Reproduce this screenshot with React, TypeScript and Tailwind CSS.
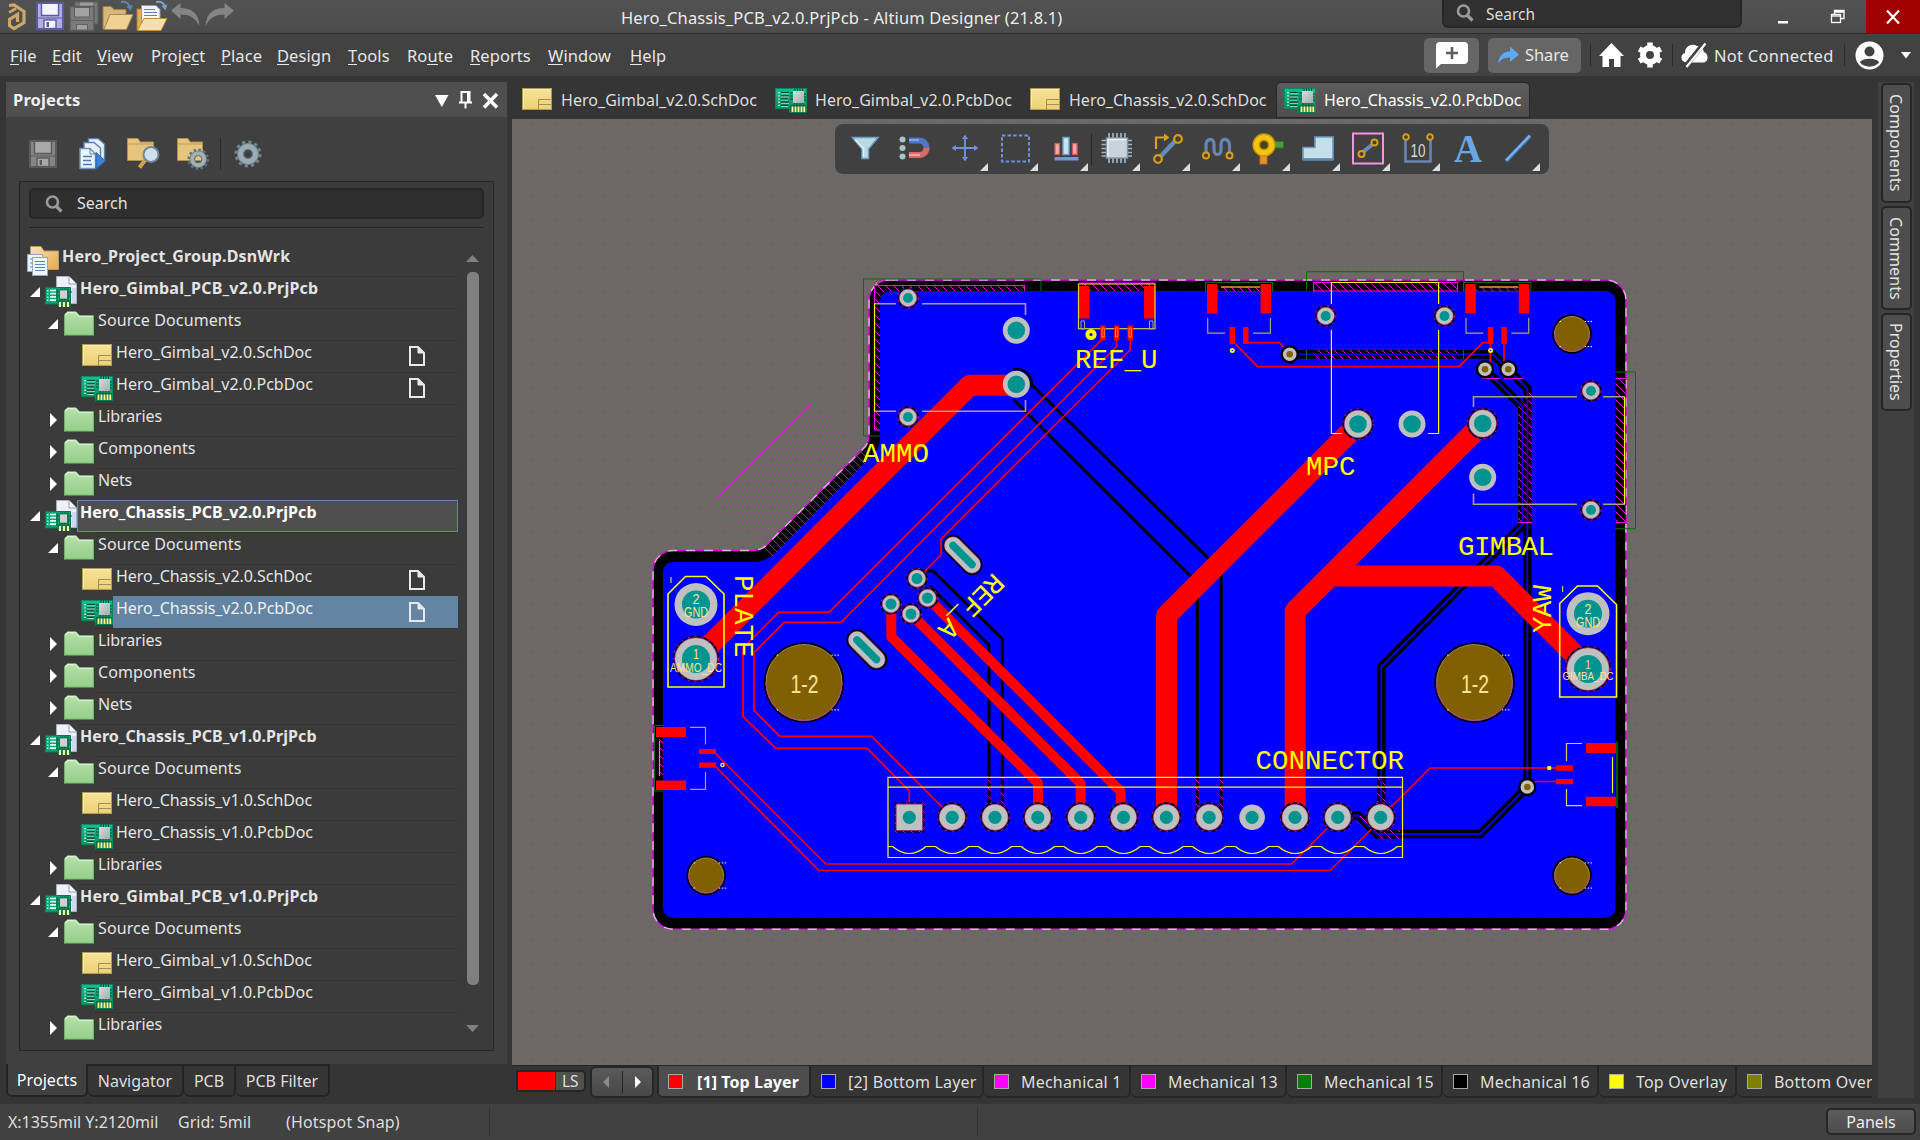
import React from "react";

/* ---------- Small shared icons ---------- */

const SchIcon = ({ className = "" }: { className?: string }) => (
  <svg className={"shrink-0 " + className} width="30" height="22" viewBox="0 0 30 22">
    <defs>
      <linearGradient id="schFill" x1="0" y1="0" x2="0" y2="1">
        <stop offset="0" stopColor="#f7e19a" />
        <stop offset="1" stopColor="#ecd274" />
      </linearGradient>
    </defs>
    <rect x="0.5" y="0.5" width="29" height="21" fill="url(#schFill)" stroke="#b09a58" />
    <path d="M1.5 20V1.5H28.5" fill="none" stroke="#fbedb9" />
    <path d="M16.5 21V11.5H29M16.5 16.5H29M20 16.5H29" fill="none" stroke="#a8904c" />
  </svg>
);

const PcbIcon = ({ className = "", w = 32, h = 25 }: { className?: string; w?: number; h?: number }) => (
  <svg className={"shrink-0 " + className} width={w} height={h} viewBox="0 0 32 25">
    <defs>
      <linearGradient id="pcbFill" x1="0" y1="0" x2="0" y2="1">
        <stop offset="0" stopColor="#12bd92" />
        <stop offset="1" stopColor="#06875a" />
      </linearGradient>
      <linearGradient id="chipFill" x1="0" y1="0" x2="1" y2="1">
        <stop offset="0" stopColor="#d8dcdb" />
        <stop offset="1" stopColor="#a5acaa" />
      </linearGradient>
    </defs>
    <path d="M0.5 0.5H31.500V24.500H14.500V20.500H0.500Z" fill="url(#pcbFill)" stroke="#078a5e" />
    <path d="M4 4V18" stroke="#eafff6" strokeWidth="1.4" strokeDasharray="1.4 1.8" />
    <path d="M6 4.700H14M6 7.900H14M6 11.100H13M6 14.300H14M6 17.500H13" stroke="#063f2c" strokeWidth="1.500" />
    <path d="M6 5.700H14M6 8.900H14M6 12.100H13M6 15.300H14M6 18.500H13" stroke="#d9fff0" strokeWidth="0.700" />
    <rect x="18" y="3" width="11" height="12" fill="url(#chipFill)" />
    <path d="M20 0.500V3M22.500 0.500V3M25 0.500V3M27.500 0.500V3M15 5H18M15 8H18M15 11H18M29 6H31M29 9H31M29 12H31M19 15V17M22 15V17M25 15V17M28 15V17" stroke="#0a4935" strokeWidth="1" />
    <rect x="15" y="17" width="16" height="7.500" fill="#066b43" />
    <path d="M17.500 18.500V24M20.500 18.500V24M23.500 18.500V24M26.500 18.500V24M29.300 18.500V24" stroke="#fbf59a" strokeWidth="1.900" />
  </svg>
);

const FolderIcon = () => (
  <svg className="shrink-0" width="30" height="25" viewBox="0 0 30 25">
    <defs>
      <linearGradient id="greenFolder" x1="0" y1="0" x2="0" y2="1">
        <stop offset="0" stopColor="#b9dfae" />
        <stop offset="1" stopColor="#93cf86" />
      </linearGradient>
    </defs>
    <path d="M0.500 24.500V3.500L3.500 0.700H12L15.500 4.500H29.500V24.500Z" fill="url(#greenFolder)" stroke="#7fae74" />
    <path d="M1.500 3.800L4 1.700H11.600L15 5.500H28.500" fill="none" stroke="#d9f2d1" strokeWidth="1.200" />
    <path d="M0.500 24.400H29.500" stroke="#4f7a48" />
  </svg>
);

const ProjectIcon = () => (
  <svg className="shrink-0" width="32" height="31" viewBox="0 0 32 31">
    <path d="M11.500 0.500H24L31.500 8V27.500H11.500Z" fill="#eef1fa" stroke="#a7afc4" />
    <path d="M24 0.500V8H31.500" fill="#fff" stroke="#8f98b4" />
    <path d="M27 12V27H31V12Z" fill="#cfd8ee" />
    <path d="M0.500 11.500H25.500V30.500H13V28H0.500Z" fill="#0ba377" stroke="#067a52" />
    <path d="M2.800 14V26" stroke="#eafff6" strokeWidth="1.400" strokeDasharray="1.400 1.800" />
    <path d="M5 14.500H11M5 17.700H11M5 20.900H11M5 24.100H11" stroke="#e5fff5" strokeWidth="1.700" />
    <path d="M12 13V26M12 16H27M12 20H25M17 12V28M20 12V28M23 12V28" stroke="#075c3e" />
    <rect x="14.500" y="14" width="8" height="9" fill="#cdd2d0" stroke="#0a4935" strokeWidth="0.600" />
    <rect x="12.500" y="24.500" width="13" height="6.500" fill="#066b43" />
    <path d="M15 26V31M19 26V31M23 26V31" stroke="#fbf59a" strokeWidth="2.200" />
  </svg>
);

const GroupIcon = () => (
  <svg className="shrink-0" width="32" height="31" viewBox="0 0 32 31">
    <defs>
      <linearGradient id="orangeFolder" x1="0" y1="0" x2="1" y2="1">
        <stop offset="0" stopColor="#f9e3b4" />
        <stop offset="1" stopColor="#e5a850" />
      </linearGradient>
    </defs>
    <path d="M3.500 23.500V0.500H14L17 5H31.500V23.500Z" fill="url(#orangeFolder)" stroke="#b99a5e" />
    <rect x="0.500" y="8.500" width="15" height="17" fill="#eef4fd" stroke="#93a4c2" />
    <path d="M3 13H5M3 17H5M3 21H5" stroke="#5e82bb" />
    <rect x="5.500" y="11.500" width="15" height="18" fill="#f1f6fd" stroke="#93a4c2" />
    <path d="M8 15.500H18M8 18.500H18M8 21.500H18M8 24.500H18" stroke="#5e82bb" strokeWidth="1.200" />
  </svg>
);

const DocIcon = () => (
  <svg width="16" height="20" viewBox="0 0 16 20">
    <path d="M1 1H9L15 7V19H1Z" fill="none" stroke="#e9e9e9" strokeWidth="2" />
    <path d="M9 1V7H15Z" fill="#e9e9e9" stroke="#e9e9e9" />
  </svg>
);

const GearShape = ({ fill, stroke }: { fill: string; stroke: string }) => (
  <g>
    <circle cx="14" cy="14" r="11.500" fill="none" stroke={stroke} strokeWidth="4" strokeDasharray="3 3.020" />
    <circle cx="14" cy="14" r="7.500" fill="none" stroke={stroke} strokeWidth="7" />
    <circle cx="14" cy="14" r="7.500" fill="none" stroke={fill} strokeWidth="5" />
    <circle cx="14" cy="14" r="4.500" fill="none" stroke="#66757c" strokeWidth="1" />
  </g>
);

const Magnifier = ({ color = "#9a9a9a" }: { color?: string }) => (
  <svg className="shrink-0" width="18" height="18" viewBox="0 0 18 18">
    <circle cx="7.500" cy="7" r="5.500" fill="none" stroke={color} strokeWidth="2.600" />
    <path d="M11 11L16.500 16.500" stroke={color} strokeWidth="3.200" />
  </svg>
);

const Floppy = ({ body, edge, light, size = 28 }: { body: string; edge: string; light: string; size?: number }) => (
  <svg className="shrink-0" width={size} height={size} viewBox="0 0 28 28">
    <rect x="1" y="1" width="26" height="26" fill={body} stroke={edge} strokeWidth="2" />
    <rect x="6" y="2" width="16" height="11" fill={light} />
    <path d="M5.500 1V13.500H22.500V1" fill="none" stroke={edge} strokeWidth="1.400" />
    <rect x="8" y="18" width="12" height="8.500" fill={light} stroke={edge} strokeWidth="1.400" />
    <rect x="10.500" y="20" width="2.500" height="5" fill={edge} />
    <path d="M1 16H27" stroke={edge} />
  </svg>
);

/* ---------- Title bar ---------- */

const TitleBar = () => (
  <div className="flex h-[34px] shrink-0 items-start border-b border-[#2c2c2c] bg-linear-to-b from-[#525252] to-[#4c4c4c]">
    <div className="flex h-[33px] w-[240px] items-start pl-2">
      <svg width="18" height="33" viewBox="0 0 18 33" className="shrink-0">
        <defs>
          <linearGradient id="goldFill" x1="0" y1="0" x2="0" y2="1">
            <stop offset="0" stopColor="#c9a763" />
            <stop offset="1" stopColor="#d8b672" />
          </linearGradient>
        </defs>
        <path d="M1 5.500L6 5L16 11.500V22.500L6 28.500L1.500 25.500V19.500L9.500 14.500V22" fill="none" stroke="#cba964" strokeWidth="3.200" />
        <path d="M1 12.500L8 8.500" stroke="#cba964" strokeWidth="2.600" />
      </svg>
      <div className="mt-0.5 ml-[10px]">
        <Floppy body="#b1aee6" edge="#5d5ba0" light="#f5f5ff" />
      </div>
      <svg className="ml-[5px] shrink-0" width="31" height="32" viewBox="0 0 31 32">
        <rect x="6" y="2" width="23" height="22" fill="#777" stroke="#5c5c5c" />
        <rect x="11" y="2.500" width="13" height="5" fill="#9a9a9a" />
        <rect x="1" y="6.500" width="24" height="24" fill="#7b7b7b" stroke="#5a5a5a" strokeWidth="1.400" />
        <rect x="5.500" y="7.500" width="15" height="9.500" fill="#a2a2a2" stroke="#606060" />
        <rect x="7.500" y="24.500" width="11" height="5.500" fill="#a2a2a2" stroke="#606060" />
        <path d="M1 20.500H25" stroke="#606060" />
      </svg>
      <svg className="ml-[2px] shrink-0" width="32" height="32" viewBox="0 0 32 32">
        <path d="M1 29V6.500H9L12 9.500H24V29Z" fill="#d9b779" stroke="#9c7f49" />
        <path d="M2 29.500L8 14.500H31L24.500 29.500Z" fill="#f0d193" stroke="#a58550" />
        <path d="M19 2C24 1 27 3 28 8" fill="none" stroke="#5c86b4" strokeWidth="2" />
        <path d="M24.500 6.500L31 5L28.500 11Z" fill="#5c86b4" />
      </svg>
      <svg className="ml-[2px] shrink-0" width="32" height="32" viewBox="0 0 32 32">
        <path d="M1 30V9H20V30Z" fill="#e7ab55" stroke="#a98345" />
        <path d="M5.500 5.500H20L24 9.500V24H5.500Z" fill="#f3f6fd" stroke="#8c98b8" />
        <path d="M8 9.500H19M8 12.500H21M8 15.500H21M8 18.500H21" stroke="#5f80c0" strokeWidth="1.200" />
        <path d="M1.500 30.500L8 18.500H31L25 30.500Z" fill="#fadfae" stroke="#c08d45" />
        <path d="M20 2C25 1 28 3 29 7" fill="none" stroke="#7aa3c6" strokeWidth="2" />
        <path d="M25.500 6L31.500 4.500L29.500 10.500Z" fill="#7aa3c6" />
      </svg>
      <svg className="ml-[3px] shrink-0" width="30" height="30" viewBox="0 0 30 30">
        <path d="M0 10.500L9.500 3V8C20 8 28 13 28.500 26C24 17 18 14.500 9.500 14.500V19Z" fill="#858585" />
      </svg>
      <svg className="ml-[3px] shrink-0" width="30" height="30" viewBox="0 0 30 30">
        <path d="M30 10.500L20.500 3V8C10 8 2 13 1.500 26C6 17 12 14.500 20.500 14.500V19Z" fill="#858585" />
      </svg>
    </div>
    <div className="ml-[381px] w-[821px] whitespace-nowrap pt-[6px] text-[16.5px] leading-6 tracking-[0.14px] text-[#ececec]">
      Hero_Chassis_PCB_v2.0.PrjPcb - Altium Designer (21.8.1)
    </div>
    <div className="flex h-[28px] w-[300px] shrink-0 items-center gap-3 rounded-b-md border-2 border-t-0 border-[#262626] bg-[#303030] pl-3 text-[#dcdcdc]">
      <Magnifier />
      <span className="pt-[2px] text-[15.5px]">Search</span>
    </div>
    <svg className="ml-[36px] mt-[8px] shrink-0" width="68" height="18" viewBox="0 0 68 18">
      <rect x="0" y="13" width="10" height="2.500" fill="#fff" />
      <path d="M56.500 6V2.500H66V10.500H62.500M56.500 4H66" fill="none" stroke="#fff" strokeWidth="1.300" />
      <rect x="53.500" y="6.500" width="9" height="8" fill="none" stroke="#fff" strokeWidth="1.300" />
      <path d="M53.500 8H62.500" stroke="#fff" strokeWidth="1.300" />
    </svg>
    <div className="ml-[20px] flex h-[33px] w-[54px] shrink-0 items-center justify-center bg-[#a00202]">
      <svg width="14" height="14" viewBox="0 0 14 14">
        <path d="M1 0.500L13 13.500M13 0.500L1 13.500" stroke="#fff" strokeWidth="2.200" />
      </svg>
    </div>
  </div>
);

/* ---------- Menu bar ---------- */

const menus: [string, string, string, string][] = [
  ["", "F", "ile", "w-[42px]"],
  ["", "E", "dit", "w-[45px]"],
  ["", "V", "iew", "w-[54px]"],
  ["Proje", "c", "t", "w-[70px]"],
  ["", "P", "lace", "w-[56px]"],
  ["", "D", "esign", "w-[71px]"],
  ["", "T", "ools", "w-[59px]"],
  ["Ro", "u", "te", "w-[63px]"],
  ["", "R", "eports", "w-[78px]"],
  ["", "W", "indow", "w-[82px]"],
  ["", "H", "elp", "w-[60px]"],
];

const Sep = ({ className = "" }: { className?: string }) => (
  <div className={"h-[22px] w-px shrink-0 bg-[#2a2a2a] " + className} />
);

const MenuBar = () => (
  <div className="flex h-[42px] shrink-0 items-center bg-[#424242] pl-[10px] text-[16.5px] text-[#e6e6e6]">
    {menus.map(([a, u, b, w]) => (
      <div key={a + u + b} className={"whitespace-nowrap pt-px tracking-[0.06px] " + w}>
        {a}
        <span className="inline-block border-b border-[#e6e6e6] leading-4">{u}</span>
        {b}
      </div>
    ))}
    <div className="ml-auto flex items-center">
      <div className="flex h-[35px] w-[55px] items-center justify-center rounded-[5px] bg-[#666]">
        <svg width="32" height="28" viewBox="0 0 32 28">
          <path d="M4 1H28Q32 1 32 5V19Q32 23 28 23H5L0 27.500V5Q0 1 4 1Z" fill="#fff" />
          <path d="M16 6V18M10 12H22" stroke="#5c5c5c" strokeWidth="2.600" />
        </svg>
      </div>
      <div className="ml-[9px] flex h-[35px] w-[93px] items-center rounded-[5px] bg-[#666] pl-[10px]">
        <svg width="21" height="18" viewBox="0 0 21 18">
          <path d="M0 17.500C1 9 6 5.500 12 5.500V0.500L21 8.500L12 16V11.500C7 11 3 13 0 17.500Z" fill="#5ea9f4" />
        </svg>
        <span className="ml-[6px] text-[16.5px] tracking-[-0.1px]">Share</span>
      </div>
      <Sep className="ml-[9px]" />
      <svg className="ml-[8px]" width="25" height="24" viewBox="0 0 25 24">
        <path d="M12.500 0L25 13H21.500V24H15V16H10V24H3.500V13H0Z" fill="#fff" />
      </svg>
      <svg className="ml-[13px]" width="26" height="26" viewBox="0 0 26 26">
        <circle cx="13" cy="13" r="7" fill="none" stroke="#fff" strokeWidth="6" />
        <path d="M13 0.500V5M13 21V25.500M2.200 6.800L6 9M20 17L23.800 19.200M2.200 19.200L6 17M20 9L23.800 6.800" stroke="#fff" strokeWidth="5.500" />
      </svg>
      <Sep className="ml-[9px]" />
      <svg className="ml-[8px]" width="28" height="26" viewBox="0 0 28 26">
        <path d="M6 20.500C-1 20.500 -1 12 4 11C4 4 11 1 16 4C22 4 23 9 22.500 10C28 11 28 20.500 22 20.500Z" fill="#fff" />
        <path d="M24 0L4 25" stroke="#424242" strokeWidth="5" />
        <path d="M24.500 1.500L5.500 25" stroke="#fff" strokeWidth="2.200" />
      </svg>
      <span className="ml-[5px] w-[120px] whitespace-nowrap pt-px text-[16.5px] tracking-[0.26px]">Not Connected</span>
      <Sep className="ml-[10px]" />
      <svg className="ml-[10px]" width="29" height="29" viewBox="0 0 29 29">
        <circle cx="14.500" cy="14.500" r="14" fill="#fff" />
        <circle cx="14.500" cy="10.500" r="5" fill="#424242" />
        <path d="M5 21.500C7 16.500 22 16.500 24 21.500C20 27 9 27 5 21.500Z" fill="#424242" />
      </svg>
      <svg className="ml-[17px] mr-[9px]" width="10" height="7" viewBox="0 0 10 7">
        <path d="M0 0H10L5 6.500Z" fill="#fff" />
      </svg>
    </div>
  </div>
);

/* ---------- Projects panel ---------- */

type Kind = "group" | "project" | "folder" | "sch" | "pcb";
type Row = { kind: Kind; label: string; open?: boolean; doc?: boolean; sel?: "outline" | "fill" };

const rows: Row[] = [
  { kind: "group", label: "Hero_Project_Group.DsnWrk" },
  { kind: "project", label: "Hero_Gimbal_PCB_v2.0.PrjPcb" },
  { kind: "folder", label: "Source Documents", open: true },
  { kind: "sch", label: "Hero_Gimbal_v2.0.SchDoc", doc: true },
  { kind: "pcb", label: "Hero_Gimbal_v2.0.PcbDoc", doc: true },
  { kind: "folder", label: "Libraries" },
  { kind: "folder", label: "Components" },
  { kind: "folder", label: "Nets" },
  { kind: "project", label: "Hero_Chassis_PCB_v2.0.PrjPcb", sel: "outline" },
  { kind: "folder", label: "Source Documents", open: true },
  { kind: "sch", label: "Hero_Chassis_v2.0.SchDoc", doc: true },
  { kind: "pcb", label: "Hero_Chassis_v2.0.PcbDoc", doc: true, sel: "fill" },
  { kind: "folder", label: "Libraries" },
  { kind: "folder", label: "Components" },
  { kind: "folder", label: "Nets" },
  { kind: "project", label: "Hero_Chassis_PCB_v1.0.PrjPcb" },
  { kind: "folder", label: "Source Documents", open: true },
  { kind: "sch", label: "Hero_Chassis_v1.0.SchDoc" },
  { kind: "pcb", label: "Hero_Chassis_v1.0.PcbDoc" },
  { kind: "folder", label: "Libraries" },
  { kind: "project", label: "Hero_Gimbal_PCB_v1.0.PrjPcb" },
  { kind: "folder", label: "Source Documents", open: true },
  { kind: "sch", label: "Hero_Gimbal_v1.0.SchDoc" },
  { kind: "pcb", label: "Hero_Gimbal_v1.0.PcbDoc" },
  { kind: "folder", label: "Libraries" },
];

const OpenArrow = ({ className = "" }: { className?: string }) => (
  <svg className={"shrink-0 " + className} width="10" height="10" viewBox="0 0 10 10">
    <path d="M10 0V10H0Z" fill="#fff" />
  </svg>
);

const labelSpacing = (row: Row) => {
  const chassis = row.label.includes("Chassis");
  if (row.kind === "group") return "font-bold tracking-[0.17px]";
  if (row.kind === "project") return chassis ? "font-bold tracking-[0.06px]" : "font-bold tracking-[0.23px]";
  if (row.kind === "folder") return row.label.length > 9 ? "tracking-[0.11px]" : "tracking-[-0.12px]";
  return chassis ? "tracking-[-0.06px]" : "tracking-[0.04px]";
};

const TreeRow = ({ row }: { row: Row }) => {
  const box =
    row.sel === "outline"
      ? "border border-[#6487a8] bg-[#4f4f4f] pl-[2px] text-white"
      : row.sel === "fill"
        ? "border-t border-[#6384a2] bg-[#6384a2] pl-[3px] text-[#f0f0f0]"
        : row.kind === "group"
          ? "border-t border-transparent pl-[3px]"
          : "border-t border-[#333] pl-[3px]";
  return (
    <div className="flex h-[32px] items-start pl-[7px]">
      {row.kind === "group" && (
        <div className="w-[32px] shrink-0 pt-[2px]">
          <GroupIcon />
        </div>
      )}
      {row.kind === "project" && (
        <div className="flex w-[50px] shrink-0 pl-[3px]">
          <OpenArrow className="mt-[11px]" />
          <div className="ml-[5px]">
            <ProjectIcon />
          </div>
        </div>
      )}
      {row.kind === "folder" && (
        <div className="flex w-[68px] shrink-0 pl-[21px]">
          {row.open ? (
            <OpenArrow className="mt-[11px]" />
          ) : (
            <svg className="ml-[2px] mr-[1px] mt-[9px] shrink-0" width="7" height="14" viewBox="0 0 7 14">
              <path d="M0 0L7 7L0 14Z" fill="#fff" />
            </svg>
          )}
          <div className="ml-[6px] pt-[3px]">
            <FolderIcon />
          </div>
        </div>
      )}
      {row.kind === "sch" && (
        <div className="w-[86px] shrink-0 pl-[55px] pt-[4px]">
          <SchIcon />
        </div>
      )}
      {row.kind === "pcb" && (
        <div className="w-[86px] shrink-0 pl-[54px] pt-[4px]">
          <PcbIcon />
        </div>
      )}
      <div className={"flex h-[32px] flex-1 items-start justify-between pr-[33px] " + box}>
        <span className={"whitespace-nowrap text-[16px] leading-[22px] " + labelSpacing(row)}>{row.label}</span>
        {row.doc && (
          <span className="pt-[5px]">
            <DocIcon />
          </span>
        )}
      </div>
    </div>
  );
};

const ProjectsPanel = () => (
  <div className="flex w-[501px] shrink-0 flex-col">
    <div className="flex h-[35px] shrink-0 items-center bg-[#4f4f4f] pl-[7px] text-[#f0f0f0]">
      <span className="text-[16.5px] font-bold tracking-[0.15px]">Projects</span>
      <svg className="ml-auto mr-[8px]" width="64" height="18" viewBox="0 0 64 18">
        <path d="M0 4H13.500L6.800 16Z" fill="#fff" />
        <path d="M26.500 11V1H34.500V11M33 1V11M24 11.500H37M30.500 11.500V17.500" fill="none" stroke="#fff" strokeWidth="2" />
        <path d="M49 3L62 16.500M62 3L49 16.500" stroke="#fff" strokeWidth="3.500" />
      </svg>
    </div>
    <div className="flex min-h-0 flex-1 flex-col bg-[#404040]">
      <div className="flex h-[64px] shrink-0 items-start pl-[23px] pt-[21px]">
        <div className="mt-[2px]">
          <Floppy body="#858585" edge="#5b5b5b" light="#a9a9a9" />
        </div>
        <svg className="ml-[22px]" width="27" height="32" viewBox="0 0 27 32">
          <path d="M9.500 0.500H19L25.500 6V22.500H9.500Z" fill="#e6f1fa" stroke="#5a80ad" strokeWidth="1.400" />
          <path d="M5 4.500H15L21.500 10V26H5Z" fill="#e6f1fa" stroke="#5a80ad" strokeWidth="1.400" />
          <path d="M1 10.500H11L16.500 16V30.500H1Z" fill="#e9f6fb" stroke="#7295bd" strokeWidth="1.400" />
          <path d="M11 10.500V16H16.500" fill="none" stroke="#5a80ad" />
          <path d="M4 18.500H13M4 22.500H12M4 26.500H13" stroke="#4f78b0" strokeWidth="1.600" />
          <path d="M17 14.500L26.500 23L17 31Z" fill="#3e82d8" stroke="#2a5fa8" />
        </svg>
        <svg className="ml-[21px]" width="33" height="31" viewBox="0 0 33 31">
          <path d="M0.500 22.500V0.500H11L13 4H26.500V22.500Z" fill="#e8c57c" stroke="#b08f4f" />
          <path d="M1 6H26" stroke="#b08f4f" strokeWidth="0.800" />
          <path d="M19 21L12.500 29.500" stroke="#d3a04a" strokeWidth="4" />
          <ellipse cx="24" cy="16.500" rx="7.500" ry="7.500" fill="#cfdfec" stroke="#6f8797" strokeWidth="2" />
        </svg>
        <svg className="ml-[17px]" width="33" height="32" viewBox="0 0 33 32">
          <path d="M0.500 22.500V0.500H11L13 4H25.500V22.500Z" fill="#e8c57c" stroke="#b08f4f" />
          <path d="M1 6H25" stroke="#b08f4f" strokeWidth="0.800" />
          <g transform="translate(10 10) scale(0.8)">
            <GearShape fill="#a3b1b5" stroke="#5f747c" />
          </g>
        </svg>
        <div className="ml-[10px] h-[32px] w-px bg-[#2a2a2a]" />
        <svg className="ml-[13px] mt-[2px]" width="28" height="28" viewBox="0 0 28 28">
          <GearShape fill="#9aacb5" stroke="#72848e" />
        </svg>
      </div>
      <div className="mx-[13px] flex h-[870px] flex-col border border-[#262626] bg-[#3b3b3b]">
        <div className="mx-[9px] mt-[6px] flex h-[31px] shrink-0 items-center gap-[14px] rounded-[5px] border-2 border-[#262626] bg-[#2f2f2f] pl-[14px] text-[16px] text-[#e0e0e0]">
          <Magnifier />
          <span className="pb-[2px]">Search</span>
        </div>
        <div className="mx-[9px] mt-[8px] h-px shrink-0 bg-[#262626]" />
        <div className="mt-[16px] flex flex-1">
          <div className="w-[438px] text-[#e4e4e4]">
            {rows.map((r, i) => (
              <TreeRow key={i} row={r} />
            ))}
          </div>
          <div className="flex flex-col items-center pl-[8px] pt-[11px]">
            <svg width="13" height="7" viewBox="0 0 13 7">
              <path d="M6.500 0L13 7H0Z" fill="#808080" />
            </svg>
            <div className="mt-[10px] h-[713px] w-[12px] rounded-[5px] bg-[#808080]" />
            <svg className="mt-[40px]" width="13" height="7" viewBox="0 0 13 7">
              <path d="M0 0H13L6.500 7Z" fill="#808080" />
            </svg>
          </div>
        </div>
      </div>
    </div>
    <div className="flex h-[40px] shrink-0 items-start text-[16px] text-[#dedede]">
      <div className="flex h-[33px] w-[82px] items-center justify-center rounded-b-md border-2 border-t-0 border-[#232323] bg-[#404040] pt-px tracking-[0.05px] text-white">Projects</div>
      <div className="flex h-[33px] w-[96px] items-center justify-center rounded-b-md border-2 border-l-0 border-[#232323] bg-[#353535] pt-px">Navigator</div>
      <div className="flex h-[33px] w-[52px] items-center justify-center rounded-b-md border-2 border-l-0 border-[#232323] bg-[#353535] pt-px">PCB</div>
      <div className="flex h-[33px] w-[94px] items-center justify-center rounded-b-md border-2 border-l-0 border-[#232323] bg-[#353535] pt-px">PCB Filter</div>
    </div>
  </div>
);

/* ---------- Document tabs ---------- */

const DocTabs = () => (
  <div className="flex h-[43px] shrink-0 items-start pt-[6px] text-[16px] text-[#dedede]">
    <div className="flex h-[36px] w-[253px] items-start pl-[10px] pt-[6px]">
      <SchIcon />
      <span className="ml-[9px] leading-[24px] tracking-[0.04px]">Hero_Gimbal_v2.0.SchDoc</span>
    </div>
    <div className="flex h-[36px] w-[255px] items-start pl-[10px] pt-[6px]">
      <PcbIcon />
      <span className="ml-[8px] leading-[24px] tracking-[0.04px]">Hero_Gimbal_v2.0.PcbDoc</span>
    </div>
    <div className="flex h-[36px] w-[256px] items-start pl-[10px] pt-[6px]">
      <SchIcon />
      <span className="ml-[9px] leading-[24px]">Hero_Chassis_v2.0.SchDoc</span>
    </div>
    <div className="flex h-[36px] w-[254px] items-start rounded-t-[5px] border border-[#262626] bg-linear-to-b from-[#5c5c5c] to-[#4e4e4e] pl-[7px] pt-[5px] text-white">
      <PcbIcon />
      <span className="ml-[8px] leading-[24px] tracking-[-0.04px]">Hero_Chassis_v2.0.PcbDoc</span>
    </div>
  </div>
);

/* ---------- Floating tool bar ---------- */

const tools: { corner?: boolean; sep?: boolean; icon: React.ReactNode }[] = [
  {
    icon: (
      <>
        <path d="M3.500 5.500H29L19.500 17V26.500H13V17Z" fill="#b9d9e4" stroke="#6fa3c4" strokeWidth="1.500" />
        <path d="M6 7.500L14.500 16.500V25" fill="none" stroke="#e4f3f7" strokeWidth="1.500" />
      </>
    ),
  },
  {
    icon: (
      <>
        <circle cx="3.500" cy="7.500" r="3" fill="#a9c2c4" />
        <circle cx="3.500" cy="16" r="3" fill="#a9c2c4" />
        <circle cx="3.500" cy="24.500" r="3" fill="#a9c2c4" />
        <path d="M10 8.500H20C24.500 8.500 27.500 12 27.500 15.500" fill="none" stroke="#4f79c8" strokeWidth="6" />
        <path d="M27.500 15.500C27.500 20 24.500 23 20 23H10" fill="none" stroke="#d86a6a" strokeWidth="6" />
        <path d="M10 8H20" stroke="#86a6e4" strokeWidth="2" />
        <path d="M10 23H21" stroke="#f4a3a0" strokeWidth="2" />
      </>
    ),
  },
  {
    corner: true,
    icon: (
      <>
        <path d="M16 4V28M4 16H28" stroke="#6e90e8" strokeWidth="1.800" />
        <path d="M16 2.500L19 7H13ZM16 29.500L13 25H19ZM2.500 16L7 13V19ZM29.500 16L25 19V13Z" fill="#6e90e8" />
      </>
    ),
  },
  { corner: true, icon: <rect x="3" y="3.500" width="27" height="26" fill="none" stroke="#6e90e8" strokeWidth="2" strokeDasharray="3.500 2.100" /> },
  {
    corner: true,
    icon: (
      <>
        <rect x="6" y="11.500" width="4.500" height="11" fill="#f5a8a4" stroke="#cf5d60" strokeWidth="1.300" />
        <rect x="14" y="5.500" width="6" height="17" fill="#c5e3f1" stroke="#6aa5cd" strokeWidth="1.400" />
        <rect x="23.500" y="11.500" width="4.500" height="11" fill="#f5a8a4" stroke="#cf5d60" strokeWidth="1.300" />
        <rect x="5.500" y="25" width="24" height="3.500" fill="#6f99dd" />
      </>
    ),
  },
  {
    corner: true,
    sep: true,
    icon: (
      <>
        <path d="M8 1V31M12 1V31M16 1V31M20 1V31M24 1V31M0.500 8.500H31M0.500 12.500H31M0.500 16.500H31M0.500 20.500H31M0.500 24H31" stroke="#9fb6c6" strokeWidth="1.700" />
        <rect x="5.500" y="6" width="21" height="20" fill="#c9d3dc" stroke="#8198a8" strokeWidth="1.400" />
        <path d="M7 25V7.500H25.500" fill="none" stroke="#eef3f6" strokeWidth="1.300" />
      </>
    ),
  },
  {
    corner: true,
    icon: (
      <>
        <path d="M9 24L24 8" stroke="#6a88b8" strokeWidth="4.500" />
        <path d="M4 17V5.500H13" fill="none" stroke="#dca019" strokeWidth="2.200" />
        <path d="M12 1.500L17.500 5.500L12 9.500Z" fill="#dca019" />
        <circle cx="26" cy="7" r="3.800" fill="#404040" stroke="#d99d18" strokeWidth="2.200" />
        <circle cx="6" cy="27" r="3.800" fill="#404040" stroke="#d99d18" strokeWidth="2.200" />
      </>
    ),
  },
  {
    corner: true,
    icon: (
      <>
        <path d="M4 22V14C4 5.500 12 5.500 12 12V18C12 24 19 24 19 18V12C19 5.500 27.500 5.500 27.500 14V22" fill="none" stroke="#6885b4" strokeWidth="3.200" />
        <circle cx="4" cy="23.500" r="3" fill="#404040" stroke="#d99d18" strokeWidth="2" />
        <circle cx="27.500" cy="23.500" r="3" fill="#404040" stroke="#d99d18" strokeWidth="2" />
      </>
    ),
  },
  {
    corner: true,
    icon: (
      <>
        <rect x="8" y="22" width="7" height="10" fill="#e8922f" stroke="#b86a1b" />
        <rect x="22" y="9.500" width="9.500" height="6.500" fill="#4b9d3a" stroke="#2f6e25" />
        <circle cx="12" cy="13" r="11" fill="#f3c312" stroke="#c4930b" strokeWidth="1.300" />
        <circle cx="12" cy="13" r="4.500" fill="#4a4021" stroke="#b98c0c" strokeWidth="1.500" />
      </>
    ),
  },
  {
    corner: true,
    icon: (
      <>
        <path d="M1 27.500V15.500H13V5H31V27.500Z" fill="#c4dfea" stroke="#6d9cc0" strokeWidth="1.700" />
        <path d="M1 27.500H31" stroke="#5d86ad" strokeWidth="2.500" />
      </>
    ),
  },
  {
    corner: true,
    icon: (
      <>
        <rect x="1" y="1.500" width="30" height="30" fill="none" stroke="#f593e2" strokeWidth="2" />
        <path d="M11 20L21 12" stroke="#6a88b8" strokeWidth="4" />
        <circle cx="22.500" cy="10.500" r="3" fill="#404040" stroke="#d99d18" strokeWidth="2" />
        <circle cx="9.500" cy="22" r="3" fill="#404040" stroke="#d99d18" strokeWidth="2" />
      </>
    ),
  },
  {
    corner: true,
    icon: (
      <>
        <path d="M3.500 7V29.500H28.500V7" fill="none" stroke="#6885b4" strokeWidth="2.600" />
        <text x="8.500" y="24.500" fontFamily="Liberation Sans" fontSize="19" fill="#d5d9de" textLength="15" lengthAdjust="spacingAndGlyphs">
          10
        </text>
        <circle cx="4" cy="5" r="2.800" fill="#404040" stroke="#d99d18" strokeWidth="1.900" />
        <circle cx="28" cy="5" r="2.800" fill="#404040" stroke="#d99d18" strokeWidth="1.900" />
      </>
    ),
  },
  {
    icon: (
      <text x="16" y="30" textAnchor="middle" fontFamily="Liberation Serif" fontWeight="bold" fontSize="40" fill="#6aa6e4" textLength="28" lengthAdjust="spacingAndGlyphs">
        A
      </text>
    ),
  },
  {
    corner: true,
    icon: (
      <>
        <path d="M4 29L28 4" stroke="#4378b8" strokeWidth="4" />
        <path d="M4 28.500L28 3.500" stroke="#7fb5ef" strokeWidth="2" />
      </>
    ),
  },
];

const ToolStrip = () => (
  <div className="absolute left-[323px] top-[5px] flex h-[50px] w-[714px] items-start rounded-lg bg-[#404040] pl-[5px]">
    {tools.map((t, i) => (
      <div key={i} className={"relative flex h-[50px] shrink-0 justify-center pt-2 " + (t.sep ? "w-[52px] pl-[2px]" : i > 5 ? "w-[50px] pl-[2px]" : "w-[50px]")}>
        {t.sep && <div className="absolute left-px top-[9px] h-[32px] w-px bg-[#262626]" />}
        <svg className="overflow-visible" width="32" height="32" viewBox="0 0 32 32">
          {t.icon}
        </svg>
        {t.corner && (
          <svg className="absolute bottom-[3px] right-[2px]" width="8" height="8" viewBox="0 0 8 8">
            <path d="M8 0V8H0Z" fill="#dcdcdc" />
          </svg>
        )}
      </div>
    ))}
  </div>
);

/* ---------- Board drawing ---------- */

const RED = "#ff0000";
const YEL = "#ffff00";
const OLIVE = "#a9a477";
const BLUE = "#0000ff";
const MAG = "#ff00ff";
const GREEN = "#0a6b12";
const GRAY = "#c0c0c0";
const TEAL = "#009490";
const BROWN = "#806000";

const Pad = ({ x, y, r, hole, ring }: { x: number; y: number; r: number; hole: number; ring?: boolean }) => (
  <g>
    {ring && (
      <>
        <circle cx={x} cy={y} r={r + 2.2} fill="#000" />
        <circle cx={x} cy={y} r={r + 1.7} fill="none" stroke={MAG} strokeWidth="0.9" strokeDasharray="2 5" />
        <circle cx={x} cy={y} r={r + 0.3} fill="none" stroke="#a020a0" strokeWidth="1" />
      </>
    )}
    <circle cx={x} cy={y} r={r} fill={GRAY} />
    <circle cx={x} cy={y} r={hole} fill={TEAL} />
  </g>
);

const Via = ({ x, y }: { x: number; y: number }) => (
  <g>
    <circle cx={x} cy={y} r="9.200" fill="#000" />
    <circle cx={x} cy={y} r="6.800" fill={GRAY} />
    <circle cx={x} cy={y} r="3.300" fill={BROWN} />
  </g>
);

const Hole = ({ x, y, r }: { x: number; y: number; r: number }) => {
  const k = r * 0.72;
  return (
    <g>
      <circle cx={x} cy={y} r={r + 2.3} fill="#000" />
      <circle cx={x} cy={y} r={r} fill={BROWN} stroke="#b89a88" strokeWidth="0.8" />
      <path d={`M${x - r} ${y}A${r} ${r} 0 0 0 ${x + r} ${y}`} fill="none" stroke="#c030a8" strokeWidth="0.9" />
      <path d={`M${x - k} ${y - k}h1.500M${x - k} ${y + k}h1.500M${x + k} ${y - k}h8M${x + k} ${y + k}h8`} stroke="#fff" strokeWidth="1" strokeDasharray="1.500 1.500" />
    </g>
  );
};

const Silk = ({ x, y, pitch, rot = 0, children }: { x: number; y: number; pitch: number; rot?: number; children: string }) => (
  <text
    transform={`translate(${x} ${y}) rotate(${rot})`}
    fontFamily="Liberation Mono, monospace"
    fontSize="27.500"
    fill={YEL}
    textLength={pitch * children.length}
  >
    {children}
  </text>
);

const PadLabel = ({ x, y, size, len, children }: { x: number; y: number; size: number; len: number; children: string }) => (
  <text x={x - len / 2} y={y} fontFamily="Liberation Sans, sans-serif" fontSize={size} fill="#ffe490" textLength={len} lengthAdjust="spacingAndGlyphs">
    {children}
  </text>
);

const Pair = ({ d }: { d: string }) => (
  <>
    <path d={d} fill="none" stroke="#000" strokeWidth="8.700" />
    <path d={d} fill="none" stroke={BLUE} strokeWidth="1.800" />
  </>
);

const connectorX = [952.2, 995, 1037.8, 1080.7, 1123.5, 1166.4, 1209.2, 1252.1, 1295, 1337.8, 1380.7];

const TopSwitch = ({ dx }: { dx: number }) => (
  <g transform={`translate(${dx} 0)`}>
    <rect x="1205.500" y="282.500" width="67" height="8.500" fill="none" stroke={GREEN} />
    <rect x="1217" y="287" width="44" height="4" fill="url(#hatch)" />
    <path d="M1221 287H1260" stroke="#d9a030" strokeWidth="1.500" />
    <path d="M1207 284H1217.500V313.500H1207ZM1260.500 284H1271V313.500H1260.500Z" fill={RED} />
    <path d="M1207.700 318V333.200H1225M1253 333.200H1270.400V318" fill="none" stroke={OLIVE} strokeWidth="1.200" />
    <path d="M1229.500 327H1235V344H1229.500ZM1243 327H1248.500V344H1243Z" fill={RED} />
    <circle cx="1232.300" cy="350.400" r="2.500" fill={YEL} />
    <circle cx="1232.300" cy="350.400" r="0.700" fill={BLUE} />
  </g>
);

const outer =
  "M889 280H1606A20 20 0 0 1 1626 300V909A20 20 0 0 1 1606 929.300H673A20 20 0 0 1 653 909V570.500A20 20 0 0 1 673 550.500H754Q761 550 766 545.500L862 450Q869 444 869 435V300A20 20 0 0 1 889 280Z";
const inner =
  "M890 291H1605.500A10 10 0 0 1 1615.500 301V908A10 10 0 0 1 1605.500 918H673A10 10 0 0 1 663 908V572A10 10 0 0 1 673 562H755Q766 561 773 555L875 452Q880 447 880 437V301A10 10 0 0 1 890 291Z";

const Board = () => {
  const fan = Array.from({ length: 25 }, (_, i) => {
    const x = 811.7 - i * 4;
    const y = 402.7 + i * 4;
    return `M${x} ${y}l57.500 57.500`;
  }).join("");
  const bumps = [909.3, ...connectorX].map((c) => `H${c - 16.7}Q${c} 860.500 ${c + 16.7} 846.500`).join("");
  return (
    <svg className="block" width="1360" height="946" viewBox="512 119 1360 946">
      <defs>
        <pattern id="hatch" width="8" height="8" patternUnits="userSpaceOnUse">
          <rect width="8" height="8" fill="#000" />
          <path d="M-1 -1L9 9M-1 7L1 9M7 -1L9 1" stroke={MAG} strokeWidth="1" />
        </pattern>
        <pattern id="grid" width="6" height="6" patternUnits="userSpaceOnUse">
          <rect width="1" height="1" fill="#ffffff" fillOpacity="0.06" />
        </pattern>
      </defs>

      <path d={outer} fill="#000" />
      <rect x="512" y="119" width="1360" height="946" fill="url(#grid)" />
      <path d={inner} fill={BLUE} />
      <path d={fan} stroke={MAG} strokeWidth="0.800" />
      <path d="M811.700 402.700L715.700 498.700" stroke={MAG} strokeWidth="1.100" />
      <path d={outer} fill="none" stroke="#e800e8" strokeWidth="1.500" />
      <path d={outer} fill="none" stroke="#cdbccd" strokeWidth="1.500" strokeDasharray="9 9" />

      {/* Keep-out hatches and courtyards along the edges */}
      <path d="M874 285.500H1024V291H889Q880 291 880 300V430H874Z" fill="url(#hatch)" />
      <path d="M880 430H874.500V285.500H1024.500V291" fill="none" stroke={MAG} strokeWidth="1.100" />
      <path d="M880 436H863.500V279H1041V291" fill="none" stroke={GREEN} />
      <rect x="1078" y="283" width="77" height="8" fill="url(#hatch)" />
      <path d="M1079 283H1155" stroke={MAG} strokeWidth="1.200" />
      <rect x="1313.500" y="282.500" width="144" height="8.500" fill="url(#hatch)" stroke={MAG} strokeWidth="1" />
      <path d="M1306.500 291V271.700H1463.500V291" fill="none" stroke={GREEN} />
      <rect x="1615.500" y="378.500" width="10" height="144" fill="url(#hatch)" />
      <path d="M1615.500 378.500H1625M1615.500 522.500H1625" stroke={MAG} />
      <path d="M1615 372H1635.500V528.700H1615" fill="none" stroke={GREEN} />

      {/* Isolation gaps on the bottom layer */}
      <g fill="none" stroke="#000" strokeWidth="3">
        <path d="M1028 381L1221.300 571V812" />
        <path d="M1014 400L1197.500 583V812" />
        <path d="M924 571H933L1002.300 639V812" />
        <path d="M930 586L989 645V812" />
      </g>
      <g fill="none" stroke="url(#hatch)" strokeWidth="3">
        <path d="M1221.300 778V812M1197.500 778V812M1002.300 778V812M989 778V812" />
      </g>
      <Pair d="M1485 369.300L1522.400 406.700V525L1381.200 667V812" />
      <Pair d="M1290 354.300H1493L1527.300 388.500V787L1480.500 834H1377L1358 815.500H1338" />
      <g fill="none" stroke="url(#hatch)" strokeWidth="3">
        <path d="M1313.500 351.500H1457.500M1313.500 357.200H1457.500M1378.500 778V804M1384 778V804" />
        <path d="M1519.700 406V523M1525 392V523M1530.200 390V523" />
        <path d="M1360 816L1378 831.500H1400M1358 820L1376 837H1400" />
      </g>
      <path d="M1482 378.500H1500M1504 378.500H1523M1518 522.500H1532" stroke={MAG} />
      <path d="M1306.500 350V359M1463.500 350V359" stroke={GREEN} />

      {/* Power traces */}
      <g fill="none" stroke={RED} strokeWidth="21" strokeLinejoin="round">
        <path d="M1016 385.300H969.700L696 659" />
        <path d="M1358 424L1166.500 615.500V813" />
        <path d="M1482.700 423.500L1295.200 611V813" />
        <path d="M1330 576H1496.300L1588 668" />
      </g>
      <g fill="none" stroke={RED} strokeWidth="10" strokeLinejoin="round">
        <path d="M891.300 604V636.700L1038 783V812" />
        <path d="M911 614L1080.700 783.500V812" />
        <path d="M927.500 598L1120.700 791.500V812" />
      </g>

      {/* Signal traces */}
      <g fill="none" stroke={RED} strokeWidth="1.700">
        <path d="M1103 338.500L829 612.300H778.500L743 648V716.700L776 748.400H867.300L909.300 791V812" />
        <path d="M1116.600 338V346.500L841 622.300H784L754 652.500V710.500L780 736.400H871.700L946 811" />
        <path d="M1130.200 338V350L941 539V555L918 578" />
        <path d="M1234 342.500L1257.500 366.700H1459.300L1482.700 342.700H1490" />
        <path d="M1247 342.700H1279.300L1288 352M1490.500 343V363L1486 368M1504 343V366" />
        <path d="M714 752L825.800 864H1291.700L1335 820.500" />
        <path d="M714 765L819 870.500H1330L1378 822.500" />
        <path d="M1382 816L1430 768H1560M1530 785L1536 781.500H1560" />
      </g>

      {/* REF_U header */}
      <path d="M1078 286H1089.500V318.500H1078ZM1144 286H1155.500V318.500H1144Z" fill={RED} />
      <rect x="1078.500" y="284" width="76.500" height="44.700" fill="none" stroke="#d6d030" strokeWidth="1.200" />
      <path d="M1081 321H1084.500V329H1081ZM1149.500 321H1153V329H1149.500Z" fill="none" stroke={OLIVE} />
      <path d="M1100.300 325.500H1105.700V340.500H1100.300ZM1114 325.500H1119.300V340.500H1114ZM1127.500 325.500H1133V340.500H1127.500Z" fill={RED} />
      <path d="M1102 328H1104.300V337H1102ZM1115.500 328H1117.800V337H1115.500ZM1129 328H1131.300V337H1129Z" fill="none" stroke="#ffa020" strokeWidth="0.900" />
      <circle cx="1091" cy="334.500" r="3.600" fill={BLUE} stroke={YEL} strokeWidth="4" />

      <TopSwitch dx={0} />
      <TopSwitch dx={258.3} />

      {/* Side switches */}
      <rect x="659" y="738" width="4" height="41" fill="url(#hatch)" />
      <path d="M663 725.500H654.500V791H663" fill="none" stroke={GREEN} />
      <path d="M659.500 741V776" stroke="#d9a030" strokeWidth="1.200" />
      <path d="M656 727H686V737H656ZM656 780.500H686V790H656ZM699 749H716V754H699ZM699 762.500H716V767.700H699Z" fill={RED} />
      <path d="M690 727.400H705.500V744.500M690 789.400H705.500V772" fill="none" stroke={OLIVE} strokeWidth="1.200" />
      <circle cx="722.500" cy="765" r="1.600" fill="none" stroke={YEL} strokeWidth="1.400" />
      <path d="M1617 741.500V808" stroke={GREEN} strokeWidth="1.500" />
      <path d="M1612.500 757V793" stroke={YEL} strokeWidth="1.100" />
      <path d="M1586 743H1616V753H1586ZM1586 796.700H1616V806.300H1586ZM1556 765.300H1573V770.700H1556ZM1556 779H1573V784.300H1556Z" fill={RED} />
      <path d="M1582 743.500H1566.500V761M1582 805.700H1566.500V789" fill="none" stroke="#d6d060" strokeWidth="1.200" />
      <circle cx="1549.300" cy="768" r="2.300" fill={YEL} />

      {/* Component outlines */}
      <g fill="none" stroke={OLIVE} strokeWidth="1.600">
        <path d="M874.500 303.800H896M922 303.800H1025.500V315M874.500 411.200H896M922 411.200H1025.500V400" />
        <path d="M1473.500 407V396.700H1577M1603 396.700H1625M1473.500 493.500V504.300H1577M1603 504.300H1625" />
      </g>
      <g fill="none" stroke={YEL} strokeWidth="1.200">
        <path d="M874.500 303.500V411.500" />
        <path d="M1624.500 397V504" />
        <path d="M1331.400 304V282.500H1438.600V304M1331.400 330V433.500H1342M1438.600 330V433.500H1428" />
        <path d="M888 777.300H1402.500V857.500H888ZM888 787.200H1402.500" />
        <path d={"M888 846.500" + bumps + "H1402.500"} />
      </g>
      <g fill="none" stroke={YEL} strokeWidth="1.600">
        <path d="M668 594L685.500 576.500H706L724 594V687H668Z" />
        <path d="M1559.700 603.500L1577.500 586H1597.500L1616.500 604.500V697H1559.700Z" />
        <path d="M671 577V583M1562.700 586V592" strokeWidth="1" />
      </g>

      {/* Mounting holes */}
      <Hole x={804} y={682.500} r={38} />
      <Hole x={1474.500} y={682.500} r={38} />
      <Hole x={1572} y={334} r={17.500} />
      <Hole x={706.200} y={875.500} r={17.500} />
      <Hole x={1572} y={875.500} r={17.500} />
      <PadLabel x={804.500} y={692.500} size={25} len={28}>1-2</PadLabel>
      <PadLabel x={1475} y={692.500} size={25} len={28}>1-2</PadLabel>

      {/* Pads */}
      <Pad x={908} y={298} r={8.500} hole={5} ring />
      <Pad x={908} y={417} r={8.500} hole={5} ring />
      <Pad x={1016.300} y={330.300} r={13.500} hole={8.800} />
      <path d="M1013 369.500A15.500 15.500 0 0 1 1031.500 388" fill="none" stroke="#000" strokeWidth="2.500" />
      <Pad x={1016.300} y={384.300} r={13.500} hole={8.800} />
      <Pad x={1325.700} y={316} r={8.500} hole={5} ring />
      <Pad x={1444.500} y={316} r={8.500} hole={5} ring />
      <Pad x={1591} y={391} r={8.500} hole={5} ring />
      <Pad x={1591} y={510} r={8.500} hole={5} ring />
      <Pad x={1358} y={424} r={13.500} hole={8.800} ring />
      <Pad x={1412} y={424} r={13.500} hole={8.800} />
      <Pad x={1482.700} y={423.500} r={13.500} hole={8.800} ring />
      <Pad x={1482.700} y={477.300} r={13.500} hole={8.800} />
      <Pad x={917} y={578.500} r={8.500} hole={5.500} ring />
      <Pad x={927.500} y={598} r={8.500} hole={5.500} ring />
      <Pad x={891} y={604} r={8.500} hole={5.500} ring />
      <Pad x={911} y={614} r={8.500} hole={5.500} ring />
      <Via x={1289.700} y={354.300} />
      <Via x={1485} y={369.300} />
      <Via x={1508.300} y={369.300} />
      <Via x={1527.300} y={787} />

      <g fill="none" strokeLinecap="round">
        <path d="M953 545.500L972 564.500M857 640L876.500 659.500" stroke="#000" strokeWidth="21.500" />
        <path d="M953 545.500L972 564.500M857 640L876.500 659.500" stroke="#702070" strokeWidth="18.500" />
        <path d="M953 545.500L972 564.500M857 640L876.500 659.500" stroke={GRAY} strokeWidth="17" />
        <path d="M953 545.500L972 564.500M857 640L876.500 659.500" stroke={TEAL} strokeWidth="7.500" />
      </g>

      <rect x="894.500" y="802.500" width="30" height="30" fill="url(#hatch)" />
      <rect x="896" y="804" width="26.700" height="26.700" fill={GRAY} stroke="#802080" />
      <circle cx="909.300" cy="817.300" r="6.600" fill={TEAL} />
      {connectorX.map((x) => (
        <Pad key={x} x={x} y={817.300} r={12.800} hole={6.600} ring={x !== 1252.1} />
      ))}

      {/* Terminal blocks */}
      <Pad x={696} y={604.500} r={21.500} hole={14} />
      <Pad x={696} y={659} r={21} hole={14} ring />
      <Pad x={1588} y={613.700} r={21.500} hole={14} />
      <Pad x={1588} y={669} r={21} hole={14} ring />
      <PadLabel x={696} y={604} size={15} len={7}>2</PadLabel>
      <PadLabel x={696} y={617} size={14} len={24}>GND</PadLabel>
      <PadLabel x={696} y={658.500} size={14} len={6}>1</PadLabel>
      <PadLabel x={696} y={671.500} size={13} len={52}>AMMO_DC</PadLabel>
      <PadLabel x={1588} y={613.500} size={15} len={7}>2</PadLabel>
      <PadLabel x={1588} y={626.500} size={14} len={24}>GND</PadLabel>
      <PadLabel x={1588} y={668.500} size={12} len={5}>1</PadLabel>
      <PadLabel x={1588} y={679.500} size={11.500} len={51}>GIMBA_DC</PadLabel>

      {/* Silkscreen names */}
      <Silk x={863} y={462} pitch={16.5}>AMMO</Silk>
      <Silk x={1075} y={368} pitch={16.5}>REF_U</Silk>
      <Silk x={1306} y={475} pitch={16.5}>MPC</Silk>
      <Silk x={1458} y={555} pitch={16}>GIMBAL</Silk>
      <Silk x={1255.500} y={769} pitch={16.5}>CONNECTOR</Silk>
      <Silk x={734.500} y={575} pitch={16.5} rot={90}>PLATE</Silk>
      <Silk x={1550.500} y={633} pitch={16} rot={-90}>YAW</Silk>
      <Silk x={993.500} y={572} pitch={16} rot={135}>REF_A</Silk>
    </svg>
  );
};

/* ---------- Layer tabs ---------- */

const layers: [string, string, string][] = [
  ["[2] Bottom Layer", "bg-[#0000ff]", "w-[173px]"],
  ["Mechanical 1", "bg-[#ff00ff]", "w-[147px]"],
  ["Mechanical 13", "bg-[#ff00ff]", "w-[156px]"],
  ["Mechanical 15", "bg-[#008000]", "w-[156px]"],
  ["Mechanical 16", "bg-[#000000]", "w-[156px]"],
  ["Top Overlay", "bg-[#ffff00]", "w-[138px]"],
  ["Bottom Over", "bg-[#808000]", "w-[150px]"],
];

const LayerTabs = () => (
  <div className="flex h-[39px] shrink-0 items-start overflow-hidden border-t border-[#262626] text-[16px] tracking-[0.2px] text-[#dedede]">
    <div className="ml-[4px] mt-[4px] flex h-[22px] w-[70px] shrink-0 items-center rounded-r-[5px] border-2 border-[#262626] bg-[#505050]">
      <div className="h-full w-[38px] shrink-0 border-r border-[#262626] bg-[#ff0000]" />
      <span className="pl-[6px] text-[15.5px] tracking-[0]">LS</span>
    </div>
    <div className="ml-[4px] flex h-[32px] w-[64px] shrink-0 items-center justify-center rounded-md border-2 border-[#262626] bg-linear-to-b from-[#5a5a5a] to-[#484848]">
      <svg width="42" height="22" viewBox="0 0 42 22">
        <path d="M8 5V17L2 11Z" fill="#8a8a8a" />
        <path d="M21.500 0V22" stroke="#262626" />
        <path d="M34 5V17L40 11Z" fill="#fff" />
      </svg>
    </div>
    <div className="ml-[3px] flex h-[32px] w-[154px] shrink-0 items-center rounded-b-md border-2 border-t-0 border-[#262626] bg-[#4d4d4d] pl-[9px] font-bold text-white">
      <span className="h-[15px] w-[15px] shrink-0 border border-[#a8a8a8] bg-[#ff0000]" />
      <span className="ml-[14px] whitespace-nowrap pt-px tracking-[0.1px]">[1] Top Layer</span>
    </div>
    {layers.map(([name, color, w]) => (
      <div key={name} className={"flex h-[32px] shrink-0 items-center rounded-b-md border-2 border-l-0 border-t-0 border-[#262626] bg-[#353535] pl-[10px] " + w}>
        <span className={"h-[15px] w-[15px] shrink-0 border border-[#a8a8a8] " + color} />
        <span className="ml-[12px] whitespace-nowrap pt-px">{name}</span>
      </div>
    ))}
  </div>
);

/* ---------- Side tabs ---------- */

const SideTabs = () => (
  <div className="ml-[6px] flex h-[1016px] w-[36px] shrink-0 flex-col items-center bg-[#404040] pt-px text-[16px] text-[#e2e2e2]">
    <div className="flex h-[120px] w-[31px] items-center justify-center rounded-[5px] border-2 border-[#262626] bg-[#4d4d4d] tracking-[0.1px] [writing-mode:vertical-rl]">Components</div>
    <div className="mt-[3px] flex h-[104px] w-[31px] items-center justify-center rounded-[5px] border-2 border-[#262626] bg-[#4d4d4d] tracking-[0.1px] [writing-mode:vertical-rl]">Comments</div>
    <div className="mt-[3px] flex h-[98px] w-[31px] items-center justify-center rounded-[5px] border-2 border-[#262626] bg-[#4d4d4d] [writing-mode:vertical-rl]">Properties</div>
  </div>
);

const StatusBar = () => (
  <div className="flex h-[36px] shrink-0 items-center bg-[#414141] text-[16px] text-[#dedede]">
    <span className="w-[170px] whitespace-nowrap pl-2 tracking-[-0.03px]">X:1355mil Y:2120mil</span>
    <span className="w-[108px] whitespace-nowrap pl-2">Grid: 5mil</span>
    <span className="w-[211px] whitespace-nowrap pl-2 tracking-[0.16px]">(Hotspot Snap)</span>
    <span className="h-[30px] w-px bg-[#333]" />
    <span className="ml-[487px] h-[30px] w-px bg-[#333]" />
    <span className="mb-[2px] ml-auto mr-[4px] flex h-[27px] w-[90px] items-center justify-center rounded-[5px] border-2 border-[#262626] bg-linear-to-b from-[#5c5c5c] to-[#4c4c4c] pt-px text-[#ececec]">Panels</span>
  </div>
);

export default function App() {
  return (
    <div className="flex h-[1140px] w-[1920px] flex-col overflow-hidden bg-[#353535] font-['Noto_Sans',sans-serif] leading-6">
      <TitleBar />
      <MenuBar />
      <div className="flex h-[1028px] shrink-0">
        <div className="flex pl-[6px] pt-[6px]">
          <ProjectsPanel />
        </div>
        <div className="ml-[5px] flex w-[1360px] shrink-0 flex-col">
          <DocTabs />
          <div className="relative h-[946px] shrink-0 bg-[#6c6866]">
            <Board />
            <ToolStrip />
          </div>
          <LayerTabs />
        </div>
        <div className="pt-[6px]">
          <SideTabs />
        </div>
      </div>
      <StatusBar />
    </div>
  );
}
